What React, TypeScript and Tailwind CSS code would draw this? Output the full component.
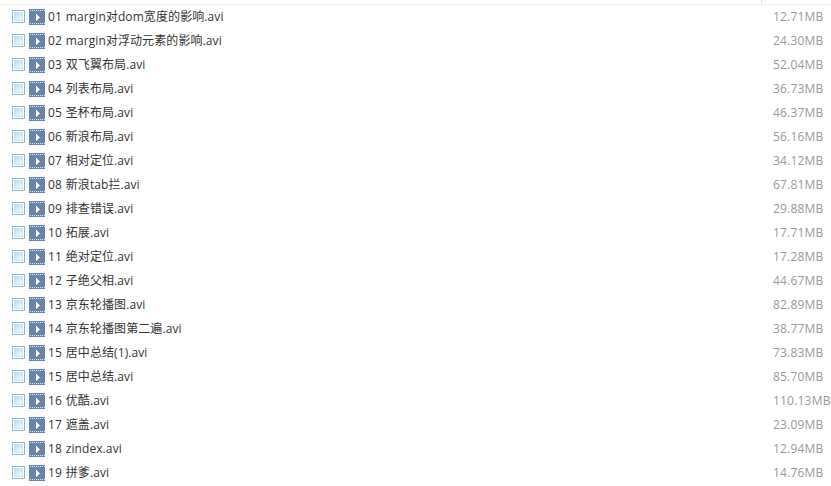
const files: { name: string; size: string }[] = [
  { name: "01 margin对dom宽度的影响.avi", size: "12.71MB" },
  { name: "02 margin对浮动元素的影响.avi", size: "24.30MB" },
  { name: "03 双飞翼布局.avi", size: "52.04MB" },
  { name: "04 列表布局.avi", size: "36.73MB" },
  { name: "05 圣杯布局.avi", size: "46.37MB" },
  { name: "06 新浪布局.avi", size: "56.16MB" },
  { name: "07 相对定位.avi", size: "34.12MB" },
  { name: "08 新浪tab拦.avi", size: "67.81MB" },
  { name: "09 排查错误.avi", size: "29.88MB" },
  { name: "10 拓展.avi", size: "17.71MB" },
  { name: "11 绝对定位.avi", size: "17.28MB" },
  { name: "12 子绝父相.avi", size: "44.67MB" },
  { name: "13 京东轮播图.avi", size: "82.89MB" },
  { name: "14 京东轮播图第二遍.avi", size: "38.77MB" },
  { name: "15 居中总结(1).avi", size: "73.83MB" },
  { name: "15 居中总结.avi", size: "85.70MB" },
  { name: "16 优酷.avi", size: "110.13MB" },
  { name: "17 遮盖.avi", size: "23.09MB" },
  { name: "18 zindex.avi", size: "12.94MB" },
  { name: "19 拼爹.avi", size: "14.76MB" },
];

function Checkbox() {
  return (
    <span className="mb-px size-[13px] shrink-0 border border-[#8fbace] bg-white p-px">
      <span className="block size-full border border-[#c9e8f4] bg-linear-to-br from-[#b2dff2] to-[#f1fbfe]" />
    </span>
  );
}

function VideoIcon() {
  return (
    <svg className="ml-1 size-4 shrink-0" viewBox="0 0 16 16" shapeRendering="crispEdges">
      <rect width="16" height="16" fill="#6685a8" />
      <path d="M1 1.5H16M1 14.5H16" stroke="#e3eaf2" strokeDasharray="1 1" />
      <path d="M7 5h1v1h1v1h1v1h1v1h-1v1h-1v1h-1v1h-1z" fill="#fff" />
    </svg>
  );
}

export default function App() {
  return (
    <div className="h-[486px] w-[831px] overflow-hidden bg-white font-['Open_Sans','Noto_Sans_CJK_SC',sans-serif] text-[12px]">
      <div className="flex h-[5px] border-b border-[#f0f0f0]">
        <div className="w-[762px] border-r border-[#dedede]" />
      </div>
      <ul>
        {files.map((file) => (
          <li key={file.name} className="flex h-6 items-center pl-3 leading-6 whitespace-nowrap">
            <Checkbox />
            <VideoIcon />
            <span className="ml-[3px] w-[725px] tracking-[0.09px] text-[#333] [word-spacing:0.6px]">
              {file.name}
            </span>
            <span className="tracking-[0.2px] text-[#999]">{file.size}</span>
          </li>
        ))}
      </ul>
    </div>
  );
}
